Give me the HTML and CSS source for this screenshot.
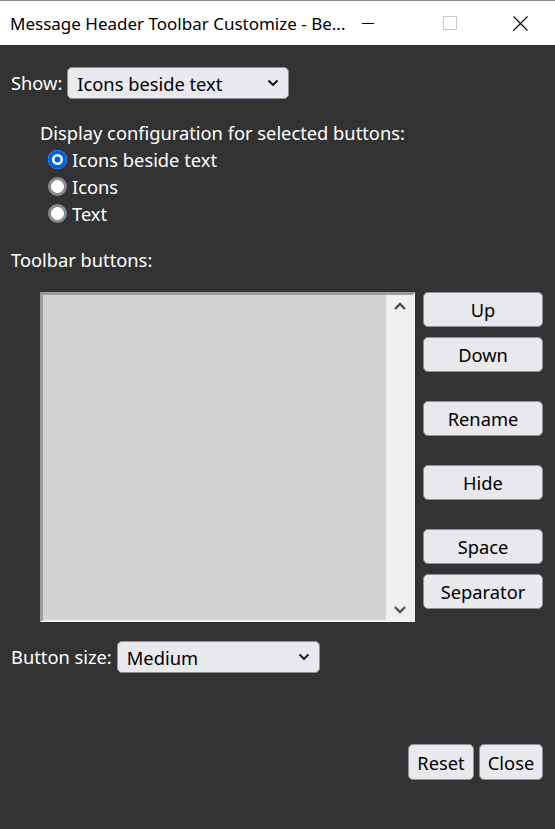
FILE: index.html
```html
<!DOCTYPE html>
<html>
<head>
<meta charset="utf-8">
<link rel="stylesheet" href="styles.css">
</head>
<body>
<div class="window">
  <div class="titlebar">
    <div class="title">Message Header Toolbar Customize - Be...</div>
    <div class="controls">
      <span class="ctl"><svg width="12" height="12" viewBox="0 0 12 12"><line x1="0" y1="6.5" x2="12" y2="6.5" stroke="#000" stroke-width="1"/></svg></span>
      <span class="ctl"><svg width="14" height="14" viewBox="0 0 14 14"><rect x="0.5" y="0.5" width="13" height="13" fill="none" stroke="#c8c8c8" stroke-width="1"/></svg></span>
      <span class="ctl"><svg width="15" height="15" viewBox="0 0 15 15"><path d="M0.5 0.5 L14.5 14.5 M14.5 0.5 L0.5 14.5" stroke="#000" stroke-width="1.1"/></svg></span>
    </div>
  </div>
  <div class="content">
    <div class="row show-row">
      <span class="label">Show:</span>
      <div class="select select-show"><span>Icons beside text</span><svg class="chev" width="12" height="8" viewBox="0 0 12 8"><path d="M1.5 1.5 L6 6 L10.5 1.5" fill="none" stroke="#000" stroke-width="1.8"/></svg></div>
    </div>
    <div class="group">
      <div class="group-title">Display configuration for selected buttons:</div>
      <div class="radio"><span class="dot checked"></span><span>Icons beside text</span></div>
      <div class="radio"><span class="dot"></span><span>Icons</span></div>
      <div class="radio"><span class="dot"></span><span>Text</span></div>
    </div>
    <div class="section-label">Toolbar buttons:</div>
    <div class="list-area">
      <div class="listbox">
        <div class="list-inner"></div>
        <div class="scrollbar">
          <svg width="14" height="9" viewBox="0 0 14 9"><path d="M2 7 L7 2 L12 7" fill="none" stroke="#505050" stroke-width="2.4"/></svg>
          <svg width="14" height="9" viewBox="0 0 14 9"><path d="M2 2 L7 7 L12 2" fill="none" stroke="#505050" stroke-width="2.4"/></svg>
        </div>
      </div>
      <div class="side-buttons">
        <div class="btn">Up</div>
        <div class="btn">Down</div>
        <div class="btn gap-before">Rename</div>
        <div class="btn gap-before">Hide</div>
        <div class="btn gap-before">Space</div>
        <div class="btn">Separator</div>
      </div>
    </div>
    <div class="row size-row">
      <span class="label">Button size:</span>
      <div class="select select-size"><span>Medium</span><svg class="chev" width="12" height="8" viewBox="0 0 12 8"><path d="M1.5 1.5 L6 6 L10.5 1.5" fill="none" stroke="#000" stroke-width="1.8"/></svg></div>
    </div>
    <div class="footer">
      <div class="btn btn-reset">Reset</div>
      <div class="btn btn-close">Close</div>
    </div>
  </div>
</div>
</body>
</html>
```

FILE: styles.css
```css
html, body {
  margin: 0;
  padding: 0;
}
body {
  width: 555px;
  height: 829px;
  background: #333333;
  font-family: "Noto Sans", "Open Sans", "DejaVu Sans", sans-serif;
  overflow: hidden;
}
.window {
  width: 555px;
  height: 829px;
  display: flex;
  flex-direction: column;
}
.titlebar {
  height: 44px;
  background: #ffffff;
  border-top: 1px solid #8a8a8a;
  display: flex;
  align-items: center;
  justify-content: space-between;
}
.title {
  padding-left: 10px;
  font-size: 17px;
  color: #000;
  white-space: nowrap;
}
.controls {
  display: flex;
  align-items: center;
  height: 100%;
}
.ctl {
  width: 46px;
  display: flex;
  align-items: center;
  justify-content: center;
}
.ctl:first-child { margin-right: 36px; }
.ctl:nth-child(2) { margin-right: 24px; }
.ctl:last-child { margin-right: 12px; }
.content {
  flex: 1;
  padding: 22px 12px 0 11px;
  color: #ffffff;
  font-size: 18.3px;
  display: flex;
  flex-direction: column;
}
.row {
  display: flex;
  align-items: center;
  gap: 5px;
}
.label {
  line-height: 24px;
}
.select {
  box-sizing: border-box;
  height: 32px;
  background: #e9e8ed;
  border: 1px solid #8f8f9d;
  border-radius: 5px;
  color: #000;
  display: flex;
  align-items: center;
  justify-content: space-between;
  padding: 0 9px 0 9px;
}
.select-show { width: 222px; }
.select-size { width: 203px; }
.chev { flex: none; }
.group {
  padding-left: 29px;
  margin-top: 21px;
}
.group-title {
  line-height: 26px;
  height: 26px;
}
.radio {
  display: flex;
  align-items: center;
  gap: 5px;
  height: 27px;
  padding-left: 8px;
}
.dot {
  box-sizing: border-box;
  width: 19px;
  height: 19px;
  border-radius: 50%;
  background: #ffffff;
  border: 3px solid #8a8a8e;
  flex: none;
}
.dot.checked {
  background: #0060df;
  border: none;
  box-shadow: inset 0 0 0 4px #0060df, inset 0 0 0 6.5px #ffffff;
}
.section-label {
  margin-top: 20px;
  line-height: 26px;
}
.list-area {
  display: flex;
  align-items: flex-start;
  gap: 8px;
  margin-top: 19px;
  padding-left: 29px;
}
.listbox {
  box-sizing: border-box;
  width: 375px;
  height: 330px;
  border-top: 3px solid #9c9c9c;
  border-left: 3px solid #9c9c9c;
  border-right: 2px solid #f0f0f0;
  border-bottom: 2px solid #f0f0f0;
  background: #d3d3d3;
  display: flex;
}
.list-inner {
  flex: 1;
}
.scrollbar {
  width: 27px;
  background: #f0f0f0;
  display: flex;
  flex-direction: column;
  justify-content: space-between;
  align-items: center;
  padding: 7px 0 6px;
}
.side-buttons {
  display: flex;
  flex-direction: column;
  gap: 10px;
}
.btn {
  box-sizing: border-box;
  background: #e9e8ed;
  border: 1px solid #8f8f9d;
  border-radius: 5px;
  color: #000;
  display: flex;
  align-items: center;
  justify-content: center;
  height: 35px;
}
.side-buttons .btn {
  width: 120px;
}
.side-buttons .gap-before {
  margin-top: 19px;
}
.size-row {
  margin-top: 19px;
}
.footer {
  display: flex;
  justify-content: flex-end;
  gap: 5px;
  margin-top: 71px;
}
.btn-reset { width: 66px; height: 36px; }
.btn-close { width: 64px; height: 36px; }
```
